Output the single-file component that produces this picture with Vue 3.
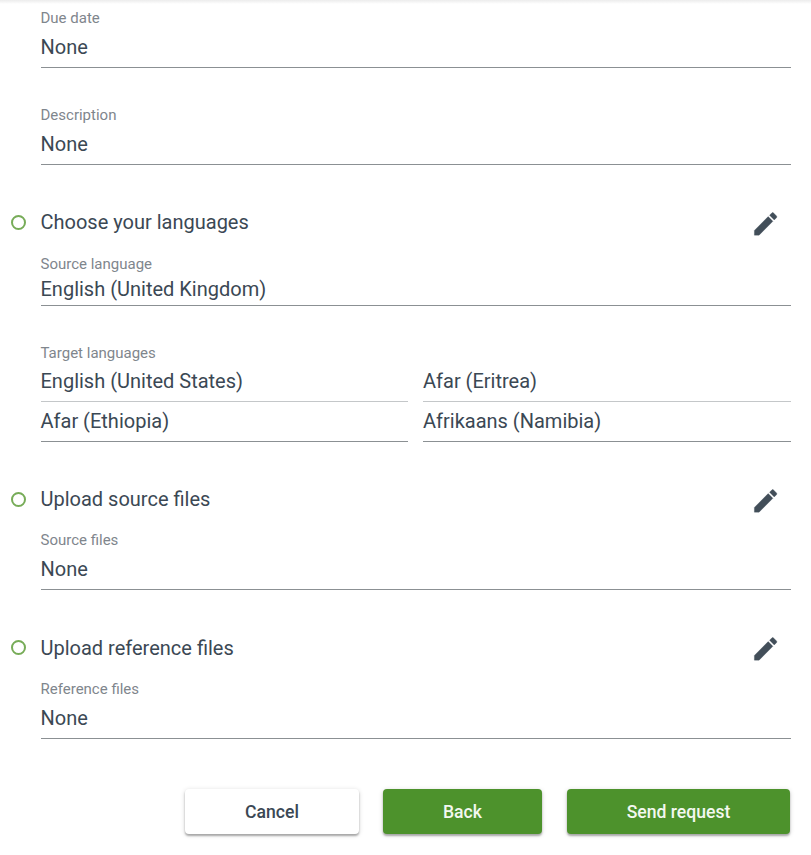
<script setup>
const details = [
  { label: 'Due date', value: 'None' },
  { label: 'Description', value: 'None' }
]
const targets = ['English (United States)', 'Afar (Eritrea)', 'Afar (Ethiopia)', 'Afrikaans (Namibia)']
const uploads = [
  { title: 'Upload source files', label: 'Source files' },
  { title: 'Upload reference files', label: 'Reference files' }
]
const pencil = 'M3 17.25V21h3.75L17.81 9.94l-3.75-3.75L3 17.25zM20.71 7.04c.39-.39.39-1.02 0-1.41l-2.34-2.34c-.39-.39-1.02-.39-1.41 0l-1.83 1.83 3.75 3.75 1.83-1.83z'
</script>

<template>
  <main class="page">
    <div v-for="d in details" :key="d.label" class="field detail">
      <div class="label">{{ d.label }}</div>
      <div class="value">{{ d.value }}</div>
    </div>

    <section class="languages">
      <header class="heading">
        <span class="dot"></span>
        <h2>Choose your languages</h2>
        <svg class="edit" viewBox="-0.5 0.1 24 24"><path :d="pencil" /></svg>
      </header>
      <div class="field source">
        <div class="label">Source language</div>
        <div class="value">English (United Kingdom)</div>
      </div>
      <div class="targets">
        <div class="label">Target languages</div>
        <div class="grid">
          <div v-for="t in targets" :key="t" class="target">{{ t }}</div>
        </div>
      </div>
    </section>

    <section v-for="u in uploads" :key="u.title" class="upload">
      <header class="heading">
        <span class="dot"></span>
        <h2>{{ u.title }}</h2>
        <svg class="edit" viewBox="-0.5 0.1 24 24"><path :d="pencil" /></svg>
      </header>
      <div class="field">
        <div class="label">{{ u.label }}</div>
        <div class="value">None</div>
      </div>
    </section>

    <footer class="actions">
      <button class="cancel">Cancel</button>
      <button class="back">Back</button>
      <button class="send">Send request</button>
    </footer>
  </main>
</template>

<style>
body { background: #fff; overflow: hidden; }
</style>

<style scoped>
.page {
  box-sizing: border-box;
  height: 855px;
  padding: 8px 20px 0 41px;
  font-family: Roboto, "Liberation Sans", sans-serif;
  color: #3b4854;
  background: linear-gradient(#ececec, #fff 4px);
}
.field { box-sizing: border-box; height: 60px; border-bottom: 1px solid #8b9093; }
.detail { margin-bottom: 37px; }
.label { height: 20px; font-size: 15px; line-height: 20px; color: #7f868d; text-indent: -0.5px; }
.value { padding-top: 4px; font-size: 20px; line-height: 30px; text-indent: -0.5px; }
.heading { display: flex; align-items: center; height: 40px; margin: 0 0 12px -30px; }
.dot { box-sizing: border-box; width: 15px; height: 15px; border: 2px solid #77ac58; border-radius: 50%; }
h2 { flex: 1; margin: 0 0 0 15px; font-size: 20px; line-height: 30px; font-weight: 400; text-indent: -0.5px; }
.edit { width: 30px; height: 30px; margin: 3.5px 11px 0 0; fill: #424e59; stroke: #424e59; stroke-width: 0.25; }
.source { height: 52px; }
.source .value { padding-top: 0; }
.targets { padding-top: 37px; }
.targets .label { height: 19px; }
.grid { display: grid; grid-template-columns: 367px 368px; column-gap: 15px; }
.target { box-sizing: border-box; height: 40px; padding-top: 4px; border-bottom: 1px solid #8b9093; font-size: 20px; line-height: 30px; text-indent: -0.5px; }
.target:nth-child(even) { text-indent: 0; }
.target:nth-child(-n+2) { border-bottom-color: #c4c7c9; }
.languages { margin-bottom: 37px; }
.upload { height: 149px; }
.upload .heading { margin-bottom: 11px; }
.upload + .upload .dot { margin-top: -1px; }
.upload + .upload .edit { margin-top: 1.5px; }
.actions { display: flex; justify-content: flex-end; margin: 12px 1px 0 0; }
button { height: 45px; padding: 1px 0 0; border: 0; border-radius: 4px; color: #f3f8f0; background: #4d922c; font: 500 17.6px/44px Roboto, "Liberation Sans", sans-serif; box-shadow: 0 2px 2px rgba(0,0,0,.28), 0 1px 5px rgba(0,0,0,.16); }
.cancel { width: 174px; color: #3b4854; background: #fff; }
.back { width: 159px; margin: 0 25px 0 24px; }
.send { width: 223px; }
</style>
